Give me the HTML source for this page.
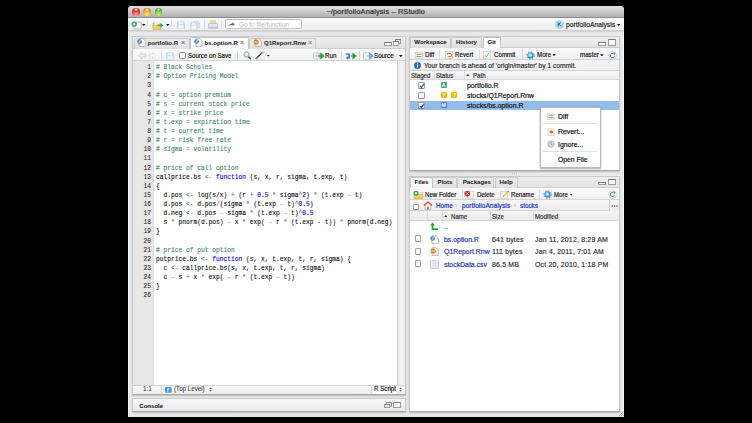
<!DOCTYPE html>
<html><head><meta charset="utf-8">
<style>
*{box-sizing:border-box;margin:0;padding:0}
html,body{width:752px;height:423px;overflow:hidden;background:#000}
body{position:relative;font-family:"Liberation Sans",sans-serif;color:#222}
.a{position:absolute}
.t{position:absolute;white-space:pre;line-height:10px;font-size:6.8px;color:#1a1a1a;-webkit-text-stroke:0.2px currentColor;transform:scaleX(0.92);transform-origin:0 0}
.b{font-weight:bold;-webkit-text-stroke:0.05px currentColor}
.mono{font-family:"Liberation Mono",monospace}
#code{left:156px;top:62.2px;font-size:8.1px;line-height:9.13px;white-space:pre;color:#111;-webkit-text-stroke:0.15px currentColor;transform:scaleX(0.7716);transform-origin:0 0}
#nums{left:121px;top:62.2px;width:30px;font-size:8.1px;line-height:9.13px;-webkit-text-stroke:0.1px currentColor;text-align:right;color:#2a2a2a;white-space:pre;transform:scaleX(0.7716);transform-origin:100% 0}
.cm{color:#438a66}
.kw{color:#0000ff}
.nu{color:#0000cd}
.op{color:#687687}
.sep{position:absolute;width:1px;background:#d0d0d0}
.tri{position:absolute;width:3.6px;height:2.2px;background:#1a1a1a;clip-path:polygon(0 0,100% 0,50% 100%)}
.utri{position:absolute;width:4px;height:2.4px;background:#333;clip-path:polygon(50% 0,100% 100%,0 100%)}
.cb{position:absolute;width:6px;height:6px;border:1px solid #a4a4a4;border-bottom-color:#8a8a8a;border-radius:1.2px;background:linear-gradient(#f4f4f4,#fff)}
.link{color:#2020b8}
</style></head><body>
<!-- window -->
<div class="a" style="left:128px;top:6px;width:496px;height:411px;background:linear-gradient(90deg,#f6f6f6 0,#f6f6f6 1px,#e8e9ec 1.5px,#e5e5e5 50%,#e8e9ec calc(100% - 1.5px),#f6f6f6 calc(100% - 1px));border-radius:4px 4px 0 0;overflow:hidden">
  <div class="a" style="left:0;top:0;width:496px;height:12px;background:linear-gradient(#e2e2e2,#b2b2b2);border-bottom:1px solid #8a8a8a"></div>
  <div class="a" style="left:0;top:12px;width:496px;height:13px;background:linear-gradient(#fafafa,#eeeeee);border-bottom:1px solid #cfcfcf;box-shadow:0 0.5px 1px rgba(0,0,0,0.08)"></div>
</div>
<!-- traffic lights -->
<div class="a" style="left:132.2px;top:8px;width:7.9px;height:7.9px;border-radius:50%;background:radial-gradient(ellipse 30% 22% at 50% 18%,rgba(255,255,255,0.95),rgba(255,255,255,0) 100%),radial-gradient(circle at 50% 80%,#ffb4b0 0,#f0403a 45%,#c41c16 80%,#8a1410 100%)"></div>
<div class="a" style="left:143.4px;top:8px;width:7.9px;height:7.9px;border-radius:50%;background:radial-gradient(ellipse 30% 22% at 50% 18%,rgba(255,255,255,0.95),rgba(255,255,255,0) 100%),radial-gradient(circle at 50% 80%,#fff090 0,#f8b030 45%,#d87010 80%,#a04a08 100%)"></div>
<div class="a" style="left:154.6px;top:8px;width:7.9px;height:7.9px;border-radius:50%;background:radial-gradient(ellipse 30% 22% at 50% 18%,rgba(255,255,255,0.95),rgba(255,255,255,0) 100%),radial-gradient(circle at 50% 80%,#c8f8a0 0,#78c840 45%,#3c9a1c 80%,#286a10 100%)"></div>
<div class="t" style="left:326.4px;top:7.2px;font-size:7.3px;color:#2a2a2a;transform:none;letter-spacing:0.18px">~/portfolioAnalysis – RStudio</div>

<!-- main toolbar -->

<!-- new file -->
<svg class="a" style="left:130.5px;top:20.5px" width="12" height="9" viewBox="0 0 12 9">
 <rect x="2.8" y="1.2" width="7.4" height="6.8" rx="1" fill="#fbfbfb" stroke="#9c9c9c" stroke-width="0.6"/>
 <path d="M3.4 8.1h6.6" stroke="#d0d0d0" stroke-width="0.5"/>
 <circle cx="3.2" cy="3.1" r="2.7" fill="#1b9e66"/>
 <path d="M3.2 1.6v3M1.7 3.1h3" stroke="#fff" stroke-width="1.1"/>
</svg>
<svg class="a" style="left:142px;top:23.8px" width="4" height="2.2" viewBox="0 0 4 2.2"><path d="M0 0h3.5l-1.75 2z" fill="#111"/></svg>
<div class="sep" style="left:147px;top:20px;height:9px;background:#e2e2e2"></div>
<!-- open folder -->
<svg class="a" style="left:151.5px;top:20.5px" width="12" height="9" viewBox="0 0 12 9">
 <path d="M1 2h3l0.8 0.8h4.2v5.5h-8z" fill="#e9c24a" stroke="#c39a24" stroke-width="0.4"/>
 <path d="M2 1.5h5.5v3h-5.5z" fill="#f6f2e4"/>
 <path d="M0.6 4.3h8.8l-0.9 4h-7.2z" fill="#f6d45c" stroke="#c9a02a" stroke-width="0.4"/>
 <path d="M5.5 3.6h3.3v-1.6l2.8 2.4-2.8 2.4v-1.6h-3.3z" fill="#22aa88"/>
</svg>
<svg class="a" style="left:166px;top:23.8px" width="4" height="2.2" viewBox="0 0 4 2.2"><path d="M0 0h3.5l-1.75 2z" fill="#111"/></svg>
<div class="sep" style="left:171.2px;top:20px;height:9px;background:#e0e0e0"></div>
<!-- save -->
<svg class="a" style="left:176.8px;top:21px" width="8" height="8" viewBox="0 0 8 8">
 <path d="M0.6 0.6h6l0.8 0.8v6h-6.8z" fill="#c9ddf0" stroke="#b0c8de" stroke-width="0.5"/>
 <rect x="1.8" y="0.6" width="4.2" height="2.6" fill="#edf3f9"/>
 <rect x="1.4" y="4.3" width="5.2" height="3.1" fill="#f7fafc"/>
 <rect x="4.6" y="5.2" width="1" height="1.6" fill="#c9ddf0"/>
</svg>
<svg class="a" style="left:190px;top:20.6px" width="10" height="9" viewBox="0 0 10 9">
 <path d="M3 0.5h5.6l0.8 0.8v5.5h-6.4z" fill="#d4e4f2" stroke="#b4cade" stroke-width="0.5"/>
 <path d="M0.6 1.8h5.8l0.8 0.8v5.8h-6.6z" fill="#c9ddf0" stroke="#b0c8de" stroke-width="0.5"/>
 <rect x="1.7" y="1.8" width="4" height="2.5" fill="#edf3f9"/>
 <rect x="1.4" y="5.3" width="5" height="3" fill="#f7fafc"/>
</svg>
<div class="sep" style="left:203.5px;top:20px;height:9px;background:#e0e0e0"></div>
<!-- print -->
<svg class="a" style="left:207.8px;top:20px" width="10" height="9" viewBox="0 0 10 9">
 <rect x="2.4" y="0.3" width="5.2" height="3.8" fill="#f4e09a" stroke="#d8c070" stroke-width="0.4"/>
 <path d="M0.4 4.6q0-1.2 1.2-1.2h6.8q1.2 0 1.2 1.2v3.6h-9.2z" fill="#e4e9ef" stroke="#9aa3ad" stroke-width="0.5"/>
 <rect x="0.6" y="6.8" width="8.8" height="1.4" fill="#bcc4cc"/>
</svg>
<div class="sep" style="left:220.5px;top:20px;height:9px;background:#e0e0e0"></div>
<!-- go to file -->
<div class="a" style="left:224.6px;top:19.4px;width:77.8px;height:9.3px;border:1px solid #c8c8c8;border-top-color:#b8b8b8;border-radius:2.5px;background:#fff"></div>
<svg class="a" style="left:227.5px;top:21px" width="7" height="6" viewBox="0 0 7 6">
 <path d="M0.5 5.5c0.5-2 2-3 4-3v-1.5l2.2 2.2-2.2 2.2v-1.4c-1.6 0-3 0.5-4 1.5z" fill="#6a6f78"/>
</svg>
<div class="t" style="left:238.5px;top:19.7px;font-size:6.96px;color:#b8b8b8;-webkit-text-stroke:0">Go to file/function</div>
<!-- project -->
<svg class="a" style="left:554.8px;top:20.3px" width="9" height="9" viewBox="0 0 9 9">
 <path d="M4.5 0.4l3.9 2v4.4l-3.9 2-3.9-2v-4.4z" fill="#a9d4ee" stroke="#86bde0" stroke-width="0.4"/>
 <path d="M0.6 2.4l3.9 2 3.9-2" fill="none" stroke="#d8eefa" stroke-width="0.6"/>
 <path d="M4.5 4.4v4" stroke="#d0e8f6" stroke-width="0.4"/>
 <path d="M3.2 2.6v3.6M3.4 4.3l2.3-1.8M3.9 3.9l1.9 2.3" stroke="#1f5fa8" stroke-width="0.9" fill="none"/>
</svg>
<div class="t" style="left:565.5px;top:19.6px;font-size:7.33px;color:#1e1e1e">portfolioAnalysis</div>
<svg class="a" style="left:617.2px;top:23.8px" width="4" height="2.2" viewBox="0 0 4 2.2"><path d="M0 0h3.5l-1.75 2z" fill="#111"/></svg>


<!-- ================= LEFT PANE ================= -->
<div class="a" style="left:132px;top:36px;width:274px;height:359px;background:#fff;border:1px solid #cacaca;border-bottom-color:#acacac;box-shadow:0 0.8px 1.2px rgba(0,0,0,0.2)"></div>
<div class="a" style="left:133px;top:37px;width:272px;height:12px;background:linear-gradient(#eeeeee,#e2e2e2);border-bottom:1px solid #cfcfcf"></div>

<div class="a" style="left:134px;top:37.5px;width:56px;height:11.5px;background:linear-gradient(#ececec,#e0e0e0);border:1px solid #c9c9c9;border-bottom:none;border-radius:2px 2px 0 0"></div>
<div class="a" style="left:248.5px;top:37.5px;width:67px;height:11.5px;background:linear-gradient(#ececec,#e0e0e0);border:1px solid #c9c9c9;border-bottom:none;border-radius:2px 2px 0 0"></div>
<div class="a" style="left:190px;top:36.5px;width:58.5px;height:13px;background:linear-gradient(#ffffff,#fbfbfb);border:1px solid #c4c4c4;border-bottom:none;border-radius:2px 2px 0 0"></div>
<svg class="a" style="left:136.8px;top:38.3px" width="9" height="9" viewBox="0 0 9 9">
 <path d="M2 0.7h4l2.3 2.3v5.4h-6.3z" fill="#fdfdfd" stroke="#8e8e8e" stroke-width="0.6"/>
 <ellipse cx="2.6" cy="3.5" rx="2.4" ry="2.2" fill="#4a82cc"/>
 <path d="M1.8 5l1.6-3" stroke="#eef4fb" stroke-width="0.7"/><path d="M2.6 2.4q1.3 0 0.8 1.1" stroke="#eef4fb" stroke-width="0.5" fill="none"/>
</svg>
<div class="t b" style="left:147.5px;top:37.9px;font-size:6.05px;color:#2b2b2b;transform:none">portfolio.R</div>
<div class="t" style="left:180.5px;top:38.3px;font-size:7.8px;color:#7a7a7a;-webkit-text-stroke:0.1px #7a7a7a">×</div>
<svg class="a" style="left:194px;top:38.3px" width="9" height="9" viewBox="0 0 9 9">
 <path d="M2 0.7h4l2.3 2.3v5.4h-6.3z" fill="#fdfdfd" stroke="#8e8e8e" stroke-width="0.6"/>
 <ellipse cx="2.6" cy="3.5" rx="2.4" ry="2.2" fill="#4a82cc"/>
 <path d="M1.8 5l1.6-3" stroke="#eef4fb" stroke-width="0.7"/><path d="M2.6 2.4q1.3 0 0.8 1.1" stroke="#eef4fb" stroke-width="0.5" fill="none"/>
</svg>
<div class="t b" style="left:204.5px;top:37.9px;font-size:6.05px;color:#1a1a1a;transform:none">bs.option.R</div>
<div class="t" style="left:240px;top:38.3px;font-size:7.8px;color:#7a7a7a;-webkit-text-stroke:0.1px #7a7a7a">×</div>
<svg class="a" style="left:252.5px;top:38.3px" width="9" height="9" viewBox="0 0 9 9">
 <path d="M2 0.7h4l2.3 2.3v5.4h-6.3z" fill="#fdfdfd" stroke="#8e8e8e" stroke-width="0.6"/>
 <circle cx="3.2" cy="4" r="2.6" fill="#e07a1a"/>
 <path d="M1.2 4h4" stroke="#fff" stroke-width="0.8"/>
</svg>
<div class="t b" style="left:264px;top:37.9px;font-size:6.05px;color:#2b2b2b;transform:none">Q1Report.Rnw</div>
<div class="t" style="left:307.5px;top:38.3px;font-size:7.8px;color:#7a7a7a;-webkit-text-stroke:0.1px #7a7a7a">×</div>
<!-- min/max -->
<div class="a" style="left:384px;top:42.3px;width:7.8px;height:3.4px;border:1px solid #9c9c9c;border-top:1.3px solid #7c7c7c;border-radius:0.8px;background:#fbfbfb"></div>
<div class="a" style="left:395.3px;top:39.3px;width:5.8px;height:4.8px;border:1px solid #9c9c9c;border-top:1.3px solid #7c7c7c;background:#f8f8f8"></div>
<div class="a" style="left:393.3px;top:41px;width:5.8px;height:4.8px;border:1px solid #9c9c9c;border-top:1.3px solid #7c7c7c;background:#f8f8f8"></div>

<div class="a" style="left:133px;top:49px;width:272px;height:12px;background:linear-gradient(#fbfbfb,#f1f1f1);border-bottom:1px solid #d4d4d4"></div>

<!-- back/forward -->
<svg class="a" style="left:137.8px;top:51.8px" width="20" height="8" viewBox="0 0 20 8">
 <path d="M0.6 3.6l3.4-3.1v1.8h3.8v2.6h-3.8v1.9z" fill="#f2f2f2" stroke="#b9b9b9" stroke-width="0.6" stroke-linejoin="round"/>
 <path d="M18.2 3.6l-3.4-3.1v1.8h-3.8v2.6h3.8v1.9z" fill="#f6f6f6" stroke="#d2d2d2" stroke-width="0.6" stroke-linejoin="round"/>
</svg>
<div class="sep" style="left:160.5px;top:51px;height:9px;background:#e0e0e0"></div>
<svg class="a" style="left:166.4px;top:52px" width="8" height="8" viewBox="0 0 8 8">
 <path d="M0.6 0.6h6l0.8 0.8v6h-6.8z" fill="#c9ddf0" stroke="#b0c8de" stroke-width="0.5"/>
 <rect x="1.8" y="0.6" width="4.2" height="2.6" fill="#edf3f9"/>
 <rect x="1.4" y="4.3" width="5.2" height="3.1" fill="#f7fafc"/>
 <rect x="3.5" y="5.2" width="1" height="1.6" fill="#c9ddf0"/>
</svg>
<div class="cb" style="left:178.6px;top:52.3px;width:7px;height:6.8px;border-color:#8e8e8e;border-radius:1.5px"></div>
<div class="t" style="left:188px;top:50.5px;font-size:6.63px;color:#1a1a1a">Source on Save</div>
<div class="sep" style="left:237px;top:51px;height:9px;background:#dadada"></div>
<svg class="a" style="left:242.5px;top:50.8px" width="9" height="9" viewBox="0 0 9 9">
 <path d="M4.8 5l2.6 2.6" stroke="#8a4a1c" stroke-width="1.6" stroke-linecap="round"/>
 <circle cx="3.5" cy="3.5" r="2.6" fill="#dcecf8" stroke="#6f8fb0" stroke-width="0.8"/>
 <path d="M2.3 2.6a1.4 1.4 0 0 1 1.6-0.8" stroke="#fff" stroke-width="0.6" fill="none"/>
 <path d="M1.5 7.8h5" stroke="#e0e0e0" stroke-width="0.5"/>
</svg>
<svg class="a" style="left:255.3px;top:50.3px" width="11" height="10" viewBox="0 0 11 10">
 <path d="M1.2 8.6l5.6-5.6" stroke="#2a2a2a" stroke-width="1.3" stroke-linecap="round"/>
 <path d="M1.2 8.6l1-1" stroke="#3a8ad8" stroke-width="1.3" stroke-linecap="round"/>
 <path d="M6 3.8l1-1" stroke="#3a8ad8" stroke-width="1.3"/>
 <path d="M8.2 0.5v3.6M6.4 2.3h3.6M7 1.1l2.4 2.4M9.4 1.1l-2.4 2.4" stroke="#f4a070" stroke-width="0.5"/>
 <path d="M2 9.4h6" stroke="#d8d8d8" stroke-width="0.5"/>
</svg>
<svg class="a" style="left:267px;top:54.6px" width="3" height="2" viewBox="0 0 3 2"><path d="M0 0h2.6l-1.3 1.6z" fill="#111"/></svg>

<!-- run -->
<svg class="a" style="left:312.5px;top:51.5px" width="12" height="8" viewBox="0 0 12 8">
 <rect x="0.5" y="1" width="6" height="6" rx="0.8" fill="#fafafa" stroke="#a8a8a8" stroke-width="0.6"/>
 <path d="M1.8 4h2.5" stroke="#7aa8d8" stroke-width="1"/>
 <path d="M5 4h4M8 1.8l2.6 2.2-2.6 2.2z" stroke="#1f9e3a" stroke-width="1.3" fill="#1f9e3a"/>
</svg>
<div class="t" style="left:324.6px;top:50.5px;font-size:6.74px;color:#1a1a1a">Run</div>
<div class="sep" style="left:341px;top:51px;height:9px;background:#dadada"></div>
<svg class="a" style="left:344.5px;top:51.5px" width="12" height="8" viewBox="0 0 12 8">
 <path d="M1 2.2h3.2v3.6h-2.3" stroke="#2f66c0" stroke-width="1.3" fill="none"/>
 <path d="M3 4.2l-2 1.6 2 1.6z" fill="#2f66c0"/>
 <path d="M5.5 4h3.5M8 1.8l2.8 2.2-2.8 2.2z" stroke="#1f9e3a" stroke-width="1.2" fill="#1f9e3a"/>
</svg>
<div class="sep" style="left:358.5px;top:51px;height:9px;background:#dadada"></div>
<svg class="a" style="left:362.5px;top:51.5px" width="12" height="8" viewBox="0 0 12 8">
 <rect x="0.5" y="0.8" width="7" height="6.5" rx="0.8" fill="#fafafa" stroke="#a8a8a8" stroke-width="0.6"/>
 <path d="M3.5 4h4M6.8 1.8l3 2.2-3 2.2z" stroke="#6aa6e0" stroke-width="1.2" fill="#6aa6e0"/>
</svg>
<div class="t" style="left:373.9px;top:50.5px;font-size:6.74px;color:#1a1a1a">Source</div>
<div class="tri" style="left:399px;top:55px"></div>

<div class="a" style="left:133px;top:61px;width:21px;height:324px;background:#e7e7e7;border-right:1px solid #dedede"></div>
<div class="a" style="left:397px;top:61px;width:8px;height:324px;background:linear-gradient(90deg,#e6e6e6,#f6f6f6 40%,#ececec);border-left:1px solid #cfcfcf"></div>
<div id="nums" class="a mono">1
2
3
4
5
6
7
8
9
10
11
12
13
14
15
16
17
18
19
20
21
22
23
24
25
26</div>
<div id="code" class="a mono"><span class="cm"># Black Scholes
# Option Pricing Model</span>

<span class="cm"># c = option premium
# s = current stock price
# x = strike price
# t.exp = expiration time
# t = current time
# r = risk free rate
# sigma = volatility</span>

<span class="cm"># price of call option</span>
callprice.bs <span class="op">&lt;-</span> <span class="kw">function</span> (s, x, r, sigma, t.exp, t)
{
  d.pos <span class="op">&lt;-</span> log(s/x) <span class="op">+</span> (r <span class="op">+</span> <span class="nu">0.5</span> <span class="op">*</span> sigma<span class="op">^</span>2) <span class="op">*</span> (t.exp <span class="op">-</span> t)
  d.pos <span class="op">&lt;-</span> d.pos<span class="op">/</span>(sigma <span class="op">*</span> (t.exp <span class="op">-</span> t)<span class="op">^</span><span class="nu">0.5</span>)
  d.neg <span class="op">&lt;-</span> d.pos <span class="op">-</span> sigma <span class="op">*</span> (t.exp <span class="op">-</span> t)<span class="op">^</span><span class="nu">0.5</span>
  s <span class="op">*</span> pnorm(d.pos) <span class="op">-</span> x <span class="op">*</span> exp( <span class="op">-</span> r <span class="op">*</span> (t.exp <span class="op">-</span> t)) <span class="op">*</span> pnorm(d.neg)
}

<span class="cm"># price of put option</span>
putprice.bs <span class="op">&lt;-</span> <span class="kw">function</span> (s, x, t.exp, t, r, sigma) {
  c <span class="op">&lt;-</span> callprice.bs(s, x, t.exp, t, r, sigma)
  c <span class="op">-</span> s <span class="op">+</span> x <span class="op">*</span> exp( <span class="op">-</span> r <span class="op">*</span> (t.exp <span class="op">-</span> t))
}
</div>
<!-- status bar -->
<div class="a" style="left:133px;top:385px;width:272px;height:9px;background:linear-gradient(#f8f8f8,#ededed);border-top:1px solid #d2d2d2"></div>

<div class="t" style="left:143px;top:384.2px;font-size:6.74px;color:#333;-webkit-text-stroke:0.05px #333">1:1</div>
<div class="sep" style="left:161px;top:386px;height:8px;background:#d8d8d8"></div>
<svg class="a" style="left:164.5px;top:386.5px" width="7" height="6" viewBox="0 0 7 6">
 <rect x="0" y="0" width="6.6" height="5.8" rx="1" fill="#3a9fe0"/>
 <path d="M4.4 1.2q-1.2-0.3-1.4 0.8l-0.5 3.3M2 2.6h2" stroke="#fff" stroke-width="0.7" fill="none"/>
</svg>
<div class="t" style="left:173.9px;top:384.2px;font-size:6.74px;color:#333;-webkit-text-stroke:0.05px #333">(Top Level)</div>
<svg class="a" style="left:209px;top:386.8px" width="3" height="5" viewBox="0 0 3 5"><path d="M0.2 1.9l1.3-1.7 1.3 1.7z" fill="#777"/><path d="M0.2 3.1l1.3 1.7 1.3-1.7z" fill="#777"/></svg>
<div class="a" style="left:370.5px;top:386px;width:26.5px;height:8px;background:#fbfbfb;border-left:1px solid #d8d8d8"></div>
<div class="t" style="left:374px;top:384.2px;font-size:6.74px;color:#222">R Script</div>
<svg class="a" style="left:399.2px;top:386.8px" width="3" height="5" viewBox="0 0 3 5"><path d="M0.2 1.9l1.3-1.7 1.3 1.7z" fill="#777"/><path d="M0.2 3.1l1.3 1.7 1.3-1.7z" fill="#777"/></svg>

<!-- console -->
<div class="a" style="left:132px;top:398px;width:274px;height:14px;background:linear-gradient(#f8f8f8,#e9e9e9);border:1px solid #cacaca;border-bottom-color:#acacac;box-shadow:0 0.8px 1.2px rgba(0,0,0,0.2)"></div>
<div class="t b" style="left:139.3px;top:400.5px;font-size:6.05px;transform:none">Console</div>
<div class="a" style="left:386px;top:402.2px;width:5.8px;height:4.8px;border:1px solid #9c9c9c;border-top:1.3px solid #7c7c7c;background:#f8f8f8"></div>
<div class="a" style="left:384px;top:403.7px;width:5.8px;height:4.8px;border:1px solid #9c9c9c;border-top:1.3px solid #7c7c7c;background:#f8f8f8"></div>
<div class="a" style="left:393px;top:402.2px;width:8px;height:6.2px;border:1px solid #9c9c9c;border-top:1.6px solid #7c7c7c;border-radius:0.5px;background:#f8f8f8"></div>

<!-- ================= RIGHT TOP PANE ================= -->
<div class="a" style="left:409px;top:36px;width:211px;height:135px;background:#fff;border:1px solid #cacaca;border-bottom-color:#acacac;box-shadow:0 0.8px 1.2px rgba(0,0,0,0.2)"></div>

<div class="a" style="left:410px;top:37px;width:209px;height:11px;background:linear-gradient(#eeeeee,#e3e3e3);border-bottom:1px solid #cfcfcf"></div>
<div class="a" style="left:410.3px;top:37.3px;width:40.8px;height:10.7px;background:linear-gradient(#ececec,#e0e0e0);border:1px solid #cacaca;border-bottom:none;border-radius:2px 2px 0 0"></div>
<div class="a" style="left:451.3px;top:37.3px;width:31px;height:10.7px;background:linear-gradient(#ececec,#e0e0e0);border:1px solid #cacaca;border-bottom:none;border-radius:2px 2px 0 0"></div>
<div class="a" style="left:482.5px;top:36.5px;width:18.5px;height:12px;background:linear-gradient(#fff,#fafafa);border:1px solid #c4c4c4;border-bottom:none;border-radius:2px 2px 0 0"></div>
<div class="t b" style="left:414.3px;top:37.1px;font-size:6.10px;color:#222;transform:none">Workspace</div>
<div class="t b" style="left:456px;top:37.1px;font-size:6.10px;color:#222;transform:none">History</div>
<div class="t b" style="left:487.4px;top:37.1px;font-size:6.10px;color:#111;transform:none">Git</div>
<div class="a" style="left:598.1px;top:42.3px;width:7.9px;height:3.4px;border:1px solid #9c9c9c;border-top:1.3px solid #7c7c7c;border-radius:0.8px;background:#fbfbfb"></div>
<div class="a" style="left:608.1px;top:39.1px;width:7.9px;height:6.6px;border:1px solid #9c9c9c;border-top:1.6px solid #7c7c7c;border-radius:0.5px;background:#f8f8f8"></div>
<!-- toolbar -->
<div class="a" style="left:410px;top:48px;width:209px;height:12px;background:linear-gradient(#fbfbfb,#f1f1f1);border-bottom:1px solid #d4d4d4"></div>
<svg class="a" style="left:414.5px;top:51.5px" width="8" height="7" viewBox="0 0 8 7">
 <rect x="0.5" y="0.5" width="7" height="6" fill="#fafafa" stroke="#b8b8b8" stroke-width="0.5"/>
 <path d="M1.5 2.3h5" stroke="#e06060" stroke-width="0.9"/><path d="M1.5 4.6h5" stroke="#30b040" stroke-width="0.9"/>
</svg>
<div class="t" style="left:425px;top:49.5px;font-size:6.74px;color:#1a1a1a">Diff</div>
<div class="sep" style="left:439px;top:50px;height:9px;background:#dadada"></div>
<svg class="a" style="left:444.5px;top:51.3px" width="8" height="8" viewBox="0 0 8 8">
 <rect x="0.5" y="0.5" width="7" height="7" fill="#fafafa" stroke="#b8b8b8" stroke-width="0.5"/>
 <path d="M2.5 2.5h2.5a1.6 1.6 0 0 1 0 3.2h-2" stroke="#e07020" stroke-width="1" fill="none"/>
 <path d="M3.2 1.2l-1.6 1.3 1.6 1.3z" fill="#e07020"/>
</svg>
<div class="t" style="left:455.3px;top:49.5px;font-size:6.74px;color:#1a1a1a">Revert</div>
<div class="sep" style="left:478.5px;top:50px;height:9px;background:#dadada"></div>
<svg class="a" style="left:483px;top:51.3px" width="8" height="8" viewBox="0 0 8 8">
 <rect x="0.5" y="0.5" width="7" height="7" fill="#fafafa" stroke="#b8b8b8" stroke-width="0.5"/>
 <path d="M2 4.3l1.3 1.5 2.8-3.8" stroke="#2a9a3a" stroke-width="0.8" fill="none"/>
</svg>
<div class="t" style="left:493.8px;top:49.5px;font-size:6.74px;color:#1a1a1a">Commit</div>
<div class="sep" style="left:521.5px;top:50px;height:9px;background:#dadada"></div>
<svg class="a" style="left:525.8px;top:50.5px" width="9" height="9" viewBox="0 0 9 9">
 <circle cx="4.5" cy="4.5" r="3.75" fill="none" stroke="#2f8ccc" stroke-width="1" stroke-dasharray="1.3 1.65"/>
 <circle cx="4.5" cy="4.5" r="3.2" fill="#3a9ad6"/>
 <circle cx="4.1" cy="3.9" r="1.9" fill="#8fd0f4"/>
 <circle cx="4.5" cy="4.5" r="1.1" fill="#e8f6fd"/>
</svg>
<div class="t" style="left:536.7px;top:49.5px;font-size:6.74px;color:#1a1a1a">More</div>
<div class="tri" style="left:552.3px;top:54px"></div>
<div class="t" style="left:579.5px;top:49.5px;font-size:6.74px;color:#1a1a1a">master</div>
<div class="tri" style="left:600px;top:54.2px"></div>
<svg class="a" style="left:608px;top:50.5px" width="9" height="9" viewBox="0 0 9 9">
 <circle cx="4.5" cy="4.5" r="3.9" fill="#f4f7fa" stroke="#a9bccf" stroke-width="0.6"/>
 <path d="M6.5 4.8a2.1 2.1 0 1 1 -0.7 -1.9" stroke="#6f88a4" stroke-width="1" fill="none"/>
 <path d="M4.8 1.6l2.6 0.3-0.8 2.4z" fill="#6f88a4"/>
</svg>
<!-- info bar -->
<div class="a" style="left:410px;top:60px;width:209px;height:10.6px;background:linear-gradient(#f4f5f6,#eceef0);border-bottom:1px solid #d2d4d6"></div>
<svg class="a" style="left:414px;top:61.8px" width="7" height="7" viewBox="0 0 7 7">
 <circle cx="3.5" cy="3.5" r="3.3" fill="#2d6fc4"/>
 <circle cx="3.5" cy="3.5" r="3.3" fill="none" stroke="#1f58a8" stroke-width="0.4"/>
 <circle cx="3.5" cy="1.9" r="0.6" fill="#fff"/>
 <path d="M3.5 3v2.6" stroke="#fff" stroke-width="1"/>
</svg>
<div class="t" style="left:423.6px;top:60.5px;font-size:7.23px;color:#333">Your branch is ahead of 'origin/master' by 1 commit.</div>
<!-- header -->
<div class="a" style="left:410px;top:70.6px;width:209px;height:9.4px;background:linear-gradient(#f6f6f6,#ececec);border-bottom:1px solid #d6d6d6"></div>
<div class="sep" style="left:433.5px;top:70.6px;height:9px;background:#dcdcdc"></div>
<div class="sep" style="left:463.5px;top:70.6px;height:9px;background:#dcdcdc"></div>
<div class="t" style="left:411px;top:70.5px;font-size:6.63px;color:#333">Staged</div>
<div class="t" style="left:435.9px;top:70.5px;font-size:6.63px;color:#333">Status</div>
<div class="utri" style="left:465.8px;top:74px"></div>
<div class="t" style="left:472.8px;top:70.5px;font-size:6.63px;color:#333">Path</div>
<!-- rows -->
<div class="a" style="left:410px;top:100.6px;width:209px;height:9.9px;background:#93bce9"></div>
<div class="cb" style="left:418.3px;top:82.2px;width:6.7px;height:6.7px"></div><svg class="a" style="left:419.1px;top:82.8px" width="6" height="6" viewBox="0 0 6 6"><path d="M1 3l1.4 1.5 2.8-3.8" stroke="#1f5fcc" stroke-width="1.3" fill="none"/></svg>
<div class="a" style="left:440.6px;top:82.3px;width:6.3px;height:6px;background:#2fb36e;border-radius:0.8px;color:#fff;font-size:5.2px;font-weight:bold;line-height:6px;text-align:center;font-family:'Liberation Sans',sans-serif">A</div>
<div class="t" style="left:466.8px;top:80.7px;font-size:7.50px;color:#111">portfolio.R</div>
<div class="cb" style="left:418.3px;top:92.1px;width:6.7px;height:6.7px"></div>
<div class="a" style="left:440.6px;top:92.2px;width:6.3px;height:6px;background:#f2b800;border-radius:0.8px;color:#fff;font-size:5.2px;font-weight:bold;line-height:6px;text-align:center;font-family:'Liberation Sans',sans-serif">?</div>
<div class="a" style="left:451.2px;top:92.2px;width:6.3px;height:6px;background:#f2b800;border-radius:0.8px;color:#fff;font-size:5.2px;font-weight:bold;line-height:6px;text-align:center;font-family:'Liberation Sans',sans-serif">?</div>
<div class="t" style="left:466.8px;top:90.6px;font-size:7.50px;color:#111">stocks/Q1Report.Rnw</div>
<div class="cb" style="left:418.3px;top:102.2px;width:6.7px;height:6.7px"></div><svg class="a" style="left:419.1px;top:102.8px" width="6" height="6" viewBox="0 0 6 6"><path d="M1 3l1.4 1.5 2.8-3.8" stroke="#1f5fcc" stroke-width="1.3" fill="none"/></svg>
<div class="a" style="left:440.6px;top:102.2px;width:6.3px;height:6px;background:#4f7fd8;border-radius:0.8px;color:#fff;font-size:5.2px;font-weight:bold;line-height:6px;text-align:center;font-family:'Liberation Sans',sans-serif">M</div>
<div class="t" style="left:466.8px;top:100.6px;font-size:7.50px;color:#111">stocks/bs.option.R</div>


<!-- ================= RIGHT BOTTOM PANE ================= -->
<div class="a" style="left:409px;top:176px;width:211px;height:236px;background:#fff;border:1px solid #cacaca;border-bottom-color:#acacac;box-shadow:0 0.8px 1.2px rgba(0,0,0,0.2)"></div>

<div class="a" style="left:410px;top:177px;width:209px;height:11px;background:linear-gradient(#eeeeee,#e3e3e3);border-bottom:1px solid #cfcfcf"></div>
<div class="a" style="left:432.3px;top:177.3px;width:24.8px;height:10.7px;background:linear-gradient(#ececec,#e0e0e0);border:1px solid #cacaca;border-bottom:none;border-radius:2px 2px 0 0"></div><div class="a" style="left:457.3px;top:177.3px;width:37px;height:10.7px;background:linear-gradient(#ececec,#e0e0e0);border:1px solid #cacaca;border-bottom:none;border-radius:2px 2px 0 0"></div><div class="a" style="left:494.6px;top:177.3px;width:23.6px;height:10.7px;background:linear-gradient(#ececec,#e0e0e0);border:1px solid #cacaca;border-bottom:none;border-radius:2px 2px 0 0"></div><div class="a" style="left:410px;top:176.5px;width:22.5px;height:11.5px;background:linear-gradient(#fff,#fafafa);border:1px solid #c4c4c4;border-bottom:none;border-radius:2px 2px 0 0"></div>
<div class="t b" style="left:414.6px;top:176.6px;font-size:6.10px;color:#111;transform:none">Files</div>
<div class="t b" style="left:437.6px;top:176.6px;font-size:6.10px;color:#222;transform:none">Plots</div>
<div class="t b" style="left:462.8px;top:176.6px;font-size:6.10px;color:#222;transform:none">Packages</div>
<div class="t b" style="left:499.5px;top:176.6px;font-size:6.10px;color:#222;transform:none">Help</div>
<div class="a" style="left:598.1px;top:182px;width:7.9px;height:3.4px;border:1px solid #9c9c9c;border-top:1.3px solid #7c7c7c;border-radius:0.8px;background:#fbfbfb"></div>
<div class="a" style="left:608.2px;top:178.8px;width:7.9px;height:6.6px;border:1px solid #9c9c9c;border-top:1.6px solid #7c7c7c;border-radius:0.5px;background:#f8f8f8"></div>
<!-- toolbar -->
<div class="a" style="left:410px;top:188px;width:209px;height:12px;background:linear-gradient(#fbfbfb,#f1f1f1);border-bottom:1px solid #d4d4d4"></div>
<svg class="a" style="left:412.5px;top:189.8px" width="11" height="9" viewBox="0 0 11 9">
 <path d="M1.6 1.6h3.2l0.8 0.8h4v5.9h-8z" fill="#e6bc3c" stroke="#c0961e" stroke-width="0.4"/>
 <path d="M2.4 2.2h6.6v2.4h-6.6z" fill="#f8f4e4"/>
 <path d="M1.4 4.2h8.4v4.2h-8.4z" fill="#f4d256" stroke="#c49a22" stroke-width="0.4"/>
 <circle cx="3" cy="3.2" r="2.5" fill="#1b9e66"/><path d="M3 1.8v2.8M1.6 3.2h2.8" stroke="#fff" stroke-width="1"/>
</svg>
<div class="t" style="left:425px;top:190px;font-size:6.63px;color:#1a1a1a">New Folder</div>
<div class="sep" style="left:461.5px;top:190px;height:9px;background:#dadada"></div>
<svg class="a" style="left:464.3px;top:189.8px" width="11" height="10" viewBox="0 0 11 10">
 <path d="M3.6 1.3h6v6.8h-6z" fill="#fbfbfb" stroke="#a8a8a8" stroke-width="0.45"/>
 <ellipse cx="6.5" cy="8.9" rx="3.6" ry="0.6" fill="#d4d4d4"/>
 <circle cx="3.3" cy="3.6" r="2.7" fill="#d22a2a" stroke="#a81818" stroke-width="0.3"/>
 <path d="M2.1 2.4l2.4 2.4M4.5 2.4l-2.4 2.4" stroke="#fff" stroke-width="0.9"/>
</svg>
<div class="t" style="left:476.8px;top:190px;font-size:6.63px;color:#1a1a1a">Delete</div>
<svg class="a" style="left:500.2px;top:189.6px" width="10" height="10" viewBox="0 0 10 10">
 <path d="M0.6 1.6h6.8v6.6h-6.8z" fill="#fbfbfb" stroke="#a8a8a8" stroke-width="0.45"/>
 <ellipse cx="4" cy="9" rx="3.6" ry="0.5" fill="#d4d4d4"/>
 <path d="M3.4 6.4l4.6-4.6" stroke="#f0c030" stroke-width="1.3"/>
 <path d="M7.6 2.2l1-1" stroke="#e04040" stroke-width="1.3"/>
 <path d="M3 6.8l0.3-1 0.7 0.7z" fill="#333"/>
</svg>
<div class="t" style="left:510.7px;top:190px;font-size:6.63px;color:#1a1a1a">Rename</div>
<div class="sep" style="left:539px;top:190px;height:9px;background:#dadada"></div>
<svg class="a" style="left:543.4px;top:189.8px" width="9" height="9" viewBox="0 0 9 9">
 <circle cx="4.5" cy="4.5" r="3.75" fill="none" stroke="#2f8ccc" stroke-width="1" stroke-dasharray="1.3 1.65"/>
 <circle cx="4.5" cy="4.5" r="3.2" fill="#3a9ad6"/>
 <circle cx="4.1" cy="3.9" r="1.9" fill="#8fd0f4"/>
 <circle cx="4.5" cy="4.5" r="1.1" fill="#e8f6fd"/>
</svg>
<div class="t" style="left:554.3px;top:190px;font-size:6.63px;color:#1a1a1a">More</div>
<div class="tri" style="left:569.5px;top:193.6px"></div>
<svg class="a" style="left:608px;top:190px" width="9" height="9" viewBox="0 0 9 9">
 <circle cx="4.5" cy="4.5" r="3.9" fill="#f4f7fa" stroke="#a9bccf" stroke-width="0.6"/>
 <path d="M6.5 4.8a2.1 2.1 0 1 1 -0.7 -1.9" stroke="#6f88a4" stroke-width="1" fill="none"/>
 <path d="M4.8 1.6l2.6 0.3-0.8 2.4z" fill="#6f88a4"/>
</svg>
<!-- path bar -->
<div class="a" style="left:410px;top:200px;width:209px;height:11.3px;background:linear-gradient(#f6f6f6,#ececec);border-bottom:1px solid #d4d4d4"></div>
<div class="cb" style="left:412.8px;top:203.5px;width:6.6px;height:6.4px"></div>
<svg class="a" style="left:422.5px;top:201.3px" width="10" height="9" viewBox="0 0 10 9">
 <path d="M1 4.5l4-3.6 4 3.6" stroke="#c0392b" stroke-width="1.1" fill="none"/>
 <path d="M2.3 4.3v4.2h5.4v-4.2l-2.7-2.4z" fill="#f6f0e6" stroke="#9a7a5a" stroke-width="0.4"/>
 <rect x="4.2" y="5.5" width="1.6" height="3" fill="#c8781e"/>
</svg>
<div class="t" style="left:435.9px;top:201px;font-size:6.85px;color:#2038c0">Home</div>
<div class="t" style="left:455px;top:200.8px;font-size:7.07px;color:#c8c8c8">›</div>
<div class="t" style="left:461.9px;top:201px;font-size:7.17px;color:#2038c0">portfolioAnalysis</div>
<div class="t" style="left:514px;top:200.8px;font-size:7.07px;color:#c8c8c8">›</div>
<div class="t" style="left:520.2px;top:201px;font-size:6.85px;color:#2038c0">stocks</div>
<div class="a" style="left:608.5px;top:200px;width:10.5px;height:11px;border-left:1px solid #d0d0d0;background:linear-gradient(#f8f8f8,#ececec)"></div>
<svg class="a" style="left:610.5px;top:204.5px" width="8" height="2" viewBox="0 0 8 2"><rect x="0.6" y="0.4" width="1.2" height="1.2" fill="#333"/><rect x="3" y="0.4" width="1.2" height="1.2" fill="#333"/><rect x="5.4" y="0.4" width="1.2" height="1.2" fill="#333"/></svg>
<!-- header -->
<div class="a" style="left:410px;top:211.3px;width:209px;height:9.6px;background:linear-gradient(#f4f4f4,#eaeaea);border-bottom:1px solid #d6d6d6"></div>
<div class="sep" style="left:426.8px;top:211.3px;height:9.6px;background:#dadada"></div>
<div class="sep" style="left:441.7px;top:211.3px;height:9.6px;background:#dadada"></div>
<div class="sep" style="left:489.5px;top:211.3px;height:9.6px;background:#dadada"></div>
<div class="sep" style="left:533px;top:211.3px;height:9.6px;background:#dadada"></div>
<div class="utri" style="left:443.8px;top:215px"></div>
<div class="t" style="left:450.8px;top:211.8px;font-size:6.63px;color:#333">Name</div>
<div class="t" style="left:492px;top:211.8px;font-size:6.63px;color:#333">Size</div>
<div class="t" style="left:535px;top:211.8px;font-size:6.63px;color:#333">Modified</div>
<!-- rows -->
<svg class="a" style="left:430px;top:222px" width="9" height="9" viewBox="0 0 9 9">
 <path d="M2.5 8v-5" stroke="#19a84a" stroke-width="1.8" fill="none"/><path d="M2.5 7.2h5.5" stroke="#19a84a" stroke-width="1.8"/>
 <path d="M0 3.6l2.5-3.2 2.5 3.2z" fill="#19a84a"/>
</svg>
<div class="t" style="left:443.8px;top:222px;font-size:7.50px;color:#2038c0">..</div>
<div class="cb" style="left:414.8px;top:235.3px;width:6.6px;height:6.7px"></div><svg class="a" style="left:429.7px;top:234.5px" width="9" height="9" viewBox="0 0 9 9">
 <path d="M2 0.7h4l2.3 2.3v5.4h-6.3z" fill="#fdfdfd" stroke="#8e8e8e" stroke-width="0.6"/>
 <ellipse cx="2.6" cy="3.5" rx="2.4" ry="2.2" fill="#4a82cc"/>
 <path d="M1.8 5l1.6-3" stroke="#eef4fb" stroke-width="0.7"/><path d="M2.6 2.4q1.3 0 0.8 1.1" stroke="#eef4fb" stroke-width="0.5" fill="none"/></svg>
<div class="t" style="left:444px;top:234.5px;font-size:7.50px;color:#1d33b0">bs.option.R</div>
<div class="t" style="left:492px;top:234.5px;font-size:7.50px;color:#333;letter-spacing:0.2px">641 bytes</div>
<div class="t" style="left:535px;top:234.5px;font-size:7.50px;color:#333;letter-spacing:0.23px">Jan 11, 2012, 8:29 AM</div>
<div class="cb" style="left:414.8px;top:247.9px;width:6.6px;height:6.7px"></div><svg class="a" style="left:429.7px;top:247.1px" width="9" height="9" viewBox="0 0 9 9">
 <path d="M2 0.7h4l2.3 2.3v5.4h-6.3z" fill="#fdfdfd" stroke="#8e8e8e" stroke-width="0.6"/>
 <circle cx="3.2" cy="4" r="2.6" fill="#e07a1a"/><path d="M1.2 4h4" stroke="#fff" stroke-width="0.8"/></svg>
<div class="t" style="left:444px;top:247.1px;font-size:7.50px;color:#1d33b0">Q1Report.Rnw</div>
<div class="t" style="left:492px;top:247.1px;font-size:7.50px;color:#333;letter-spacing:0.2px">111 bytes</div>
<div class="t" style="left:535px;top:247.1px;font-size:7.50px;color:#333;letter-spacing:0.23px">Jan 4, 2011, 7:01 AM</div>
<div class="cb" style="left:414.8px;top:260.3px;width:6.6px;height:6.7px"></div><svg class="a" style="left:429.7px;top:259.5px" width="9" height="9" viewBox="0 0 9 9">
 <rect x="0.6" y="0.8" width="7.8" height="7.6" fill="#f4f6f8" stroke="#a0a8b0" stroke-width="0.5"/>
 <path d="M0.6 3.3h7.8M0.6 5.8h7.8M3.2 0.8v7.6M5.8 0.8v7.6" stroke="#c0c8d0" stroke-width="0.5"/></svg>
<div class="t" style="left:444px;top:259.5px;font-size:7.50px;color:#1d33b0">stockData.csv</div>
<div class="t" style="left:492px;top:259.5px;font-size:7.50px;color:#333;letter-spacing:0.2px">86.5 MB</div>
<div class="t" style="left:535px;top:259.5px;font-size:7.50px;color:#333;letter-spacing:0.23px">Oct 20, 2010, 1:18 PM</div>


<svg class="a" style="left:617px;top:410px" width="7" height="7" viewBox="0 0 7 7">
 <path d="M6.5 1.5l-5 5M6.5 3.5l-3 3M6.5 5.5l-1 1" stroke="#9a9a9a" stroke-width="0.6"/>
 <path d="M6.5 2.3l-4.2 4.2M6.5 4.3l-2.2 2.2" stroke="#fff" stroke-width="0.5"/>
</svg>
<!-- splitter handle -->
<div class="a" style="left:512px;top:172.5px;width:5px;height:1.5px;background:repeating-linear-gradient(90deg,#b8b8b8 0 1px,transparent 1px 2px)"></div>
<!-- context menu -->

<div class="a" style="left:539.6px;top:107.3px;width:61px;height:61px;background:#fff;border:1px solid #b8b8b8;box-shadow:0 1px 2px rgba(0,0,0,0.35);border-radius:1px"></div>
<svg class="a" style="left:546.8px;top:112.6px" width="8" height="7" viewBox="0 0 8 7">
 <rect x="0.5" y="0.5" width="7" height="6" fill="#fafafa" stroke="#c0c0c0" stroke-width="0.5"/>
 <path d="M1.5 2.3h5" stroke="#e06060" stroke-width="0.9"/><path d="M1.5 4.6h5" stroke="#30b040" stroke-width="0.9"/>
</svg>
<div class="t" style="left:558px;top:111.5px;font-size:7.50px;color:#111">Diff</div>
<div class="a" style="left:543px;top:123.3px;width:54px;height:1px;background:#e2e2e2"></div>
<svg class="a" style="left:546.8px;top:127.5px" width="8" height="8" viewBox="0 0 8 8">
 <path d="M1 0.8h4.5l1.8 1.8v5h-6.3z" fill="#fafafa" stroke="#b0b0b0" stroke-width="0.5"/>
 <path d="M2 3.5l2.5-1.3 2 2.2-2.5 1.4z" fill="#e06a20"/>
</svg>
<div class="t" style="left:558px;top:126.8px;font-size:7.50px;color:#111">Revert...</div>
<svg class="a" style="left:546.8px;top:140.3px" width="8" height="8" viewBox="0 0 8 8">
 <circle cx="4" cy="4" r="3.3" fill="#d8d8d8" stroke="#a8a8a8" stroke-width="0.6"/>
 <path d="M4 2v2.2l1.4 1" stroke="#888" stroke-width="0.7" fill="none"/>
</svg>
<div class="t" style="left:558px;top:139.6px;font-size:7.50px;color:#111">Ignore...</div>
<div class="a" style="left:543px;top:151.2px;width:54px;height:1px;background:#e2e2e2"></div>
<div class="t" style="left:558px;top:154.6px;font-size:7.39px;color:#111">Open File</div>

</body></html>
